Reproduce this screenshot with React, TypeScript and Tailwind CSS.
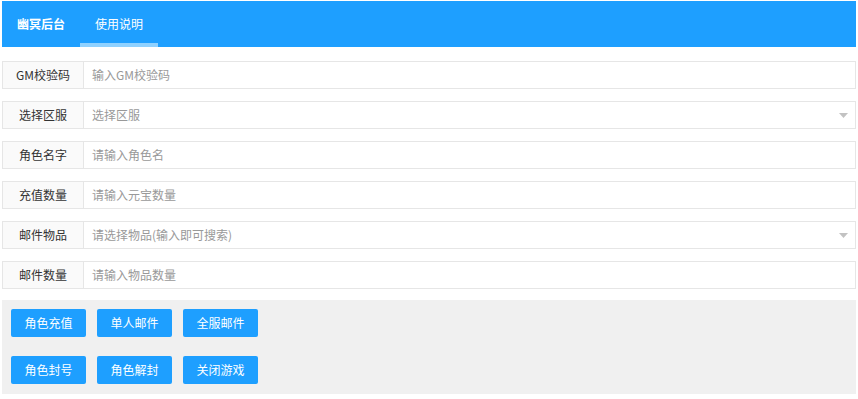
import React from "react";

const font = { fontFamily: '"Noto Sans CJK SC", "Noto Sans", sans-serif' };

function Row({ label, placeholder, select }: { label: string; placeholder: string; select?: boolean }) {
  return (
    <div className="flex h-[28px] border border-[#e6e6e6] bg-white">
      <div className="w-[81px] shrink-0 bg-[#fafafa] border-r border-[#e6e6e6] flex items-center justify-center text-[12px] text-[#333]">
        {label}
      </div>
      <div className="flex-1 flex items-center pl-[8px] pr-[7px] text-[12px] text-[#999]">
        <span className="flex-1">{placeholder}</span>
        {select && (
          <svg width="9" height="5" viewBox="0 0 9 5">
            <polygon points="0,0 9,0 4.5,5" fill="#c2c2c2" />
          </svg>
        )}
      </div>
    </div>
  );
}

function Btn({ children }: { children: React.ReactNode }) {
  return (
    <div className="w-[75px] h-[28px] rounded-[2px] bg-[#1e9fff] text-white text-[12px] flex items-center justify-center">
      {children}
    </div>
  );
}

export default function App() {
  return (
    <div style={font} className="w-[858px] h-[399px] bg-white pt-[1px] px-[2px]">
      <div className="h-[46px] bg-[#1e9fff] flex items-stretch pl-[15px]">
        <div className="flex items-center text-white text-[12px] font-bold pr-[15px]">幽冥后台</div>
        <div className="relative w-[78px] flex items-center justify-center text-white text-[12px]">
          使用说明
          <div className="absolute left-0 right-0 bottom-0 h-[4px] bg-[#8fd1ff]" />
        </div>
      </div>
      <div className="mt-[14px] flex flex-col gap-[12px]">
        <Row label="GM校验码" placeholder="输入GM校验码" />
        <Row label="选择区服" placeholder="选择区服" select />
        <Row label="角色名字" placeholder="请输入角色名" />
        <Row label="充值数量" placeholder="请输入元宝数量" />
        <Row label="邮件物品" placeholder="请选择物品(输入即可搜索)" select />
        <Row label="邮件数量" placeholder="请输入物品数量" />
      </div>
      <div className="mt-[11px] h-[94px] bg-[#f0f0f0] px-[9px] pt-[9px] flex flex-col gap-[19px]">
        <div className="flex gap-[11px]">
          <Btn>角色充值</Btn>
          <Btn>单人邮件</Btn>
          <Btn>全服邮件</Btn>
        </div>
        <div className="flex gap-[11px]">
          <Btn>角色封号</Btn>
          <Btn>角色解封</Btn>
          <Btn>关闭游戏</Btn>
        </div>
      </div>
    </div>
  );
}
